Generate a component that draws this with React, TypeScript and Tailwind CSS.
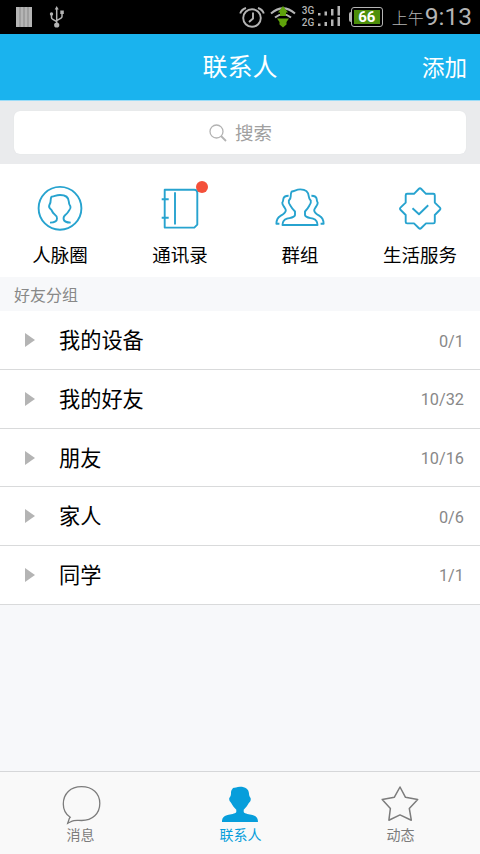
import { ReactElement } from "react";
import clsx from "clsx";

interface Shortcut {
  label: string;
  icon: ReactElement;
  hasBadge?: boolean;
}

interface FriendGroup {
  name: string;
  count: string;
}

interface Tab {
  label: string;
  icon: ReactElement;
  active?: boolean;
}

const shortcutIcon = {
  viewBox: "0 0 48 48",
  fill: "none",
  stroke: "#27a3cf",
  strokeWidth: 1.9,
  strokeLinejoin: "round" as const,
  className: "w-12 h-12 overflow-visible",
};

const shortcuts: Shortcut[] = [
  {
    label: "人脉圈",
    icon: (
      <svg {...shortcutIcon}>
        <circle cx="24" cy="24.3" r="21.4" />
        <path d="M14 38.600C18.500 38.600 21 37.500 21 34.500C21 32.500 19.800 31.200 18 29.800C16.300 28.500 16.200 26.800 15.200 25.700C13.500 24.400 12.500 23.200 13.300 21.200C14.400 19.200 14.800 17.500 14.700 16C14.700 14.500 15 13.500 15.600 12.600C18.500 12.800 19.500 11 24 11C29.500 11 32.600 13.500 32.800 17.500C32.800 19.500 33.400 21 34.400 22.300C35 23.800 34.400 25 33.200 26.300C32 28 31.600 29 29.800 30.500C28 31.800 27.300 33 27.600 35C28 37.800 31 38.600 34.700 38.600" />
      </svg>
    ),
  },
  {
    label: "通讯录",
    hasBadge: true,
    icon: (
      <svg {...shortcutIcon}>
        <path d="M8.700 5.800h29.600q3 0 3 3v31.800l-3 3H8.700zM19 8.300v32.200M5.700 15.300h7M5.700 33.700h7" />
      </svg>
    ),
  },
  {
    label: "群组",
    icon: (
      <svg {...shortcutIcon}>
        <path d="M15.700 7.500C18.500 7.500 20 5.400 24.300 5.400C29.300 5.400 32.500 8 32.800 12.500C32.900 14.300 33.700 15.300 34.800 16.700C35.300 18.700 34.500 20.200 33.300 21.700C32.200 23.700 31 25.500 29 27.500V31C29.400 33.600 33.500 33.700 37 34.700C40.300 35.800 41.500 37.600 41.500 41H6.500C6.500 37.600 7.700 35.800 11 34.700C14.500 33.700 18.600 33.600 19 31V27.500C17 25.500 15.400 23.700 14.400 21.700C13.200 20.200 12.300 18.700 12.800 16.700C14 15.300 14.800 14.300 14.700 12.500C14.600 10.500 14.800 9 15.700 7.500z" />
        <path d="M12.600 11.700C9.600 11.700 7.500 13 7.300 15.200C7.200 17 6.900 17.700 6.300 18.700C6.300 20.500 7.200 21.300 7.900 22.500C8.600 24 9.700 24.800 9.800 26.200C9.800 29 7 30.300 4.500 31.800C1.300 33.500.4 35.600.4 39.800H3.400M35.400 11.700C38.400 11.700 40.500 13 40.700 15.200C40.800 17 41.100 17.700 41.700 18.700C41.700 20.500 40.800 21.300 40.100 22.500C39.400 24 38.300 24.800 38.200 26.200C38.200 29 41 30.300 43.500 31.800C46.700 33.500 47.600 35.600 47.600 39.800H44.600" />
      </svg>
    ),
  },
  {
    label: "生活服务",
    icon: (
      <svg {...shortcutIcon}>
        <path d="M22.700 5q1.300-1.300 2.600 0L30 9.800h7.400q1.400 0 1.400 1.400v7.400l4.900 4.800q1.300 1.300 0 2.600L38.800 31v7q0 1.400-1.400 1.400H30L25.300 44q-1.300 1.300-2.600 0L18 39.400h-6.900q-1.400 0-1.400-1.400v-7l-5-5q-1.300-1.300 0-2.600l5-4.800v-7.400q0-1.400 1.400-1.400H18z" />
        <path d="M16.500 24.300l6.500 5.900 9.200-9" />
      </svg>
    ),
  },
];

const groups: FriendGroup[] = [
  { name: "我的设备", count: "0/1" },
  { name: "我的好友", count: "10/32" },
  { name: "朋友", count: "10/16" },
  { name: "家人", count: "0/6" },
  { name: "同学", count: "1/1" },
];

const tabs: Tab[] = [
  {
    label: "消息",
    icon: (
      <svg viewBox="0 0 40 40" className="w-10 h-10 overflow-visible" fill="none" stroke="#7c7c7c" strokeWidth="1.300">
        <path d="M10.200 32.200C5.500 29.200 3.300 24.500 3.300 19C3.300 8.500 10.500 1.700 21.500 1.700S39.800 8.500 39.800 18.500S32.500 35.500 21.500 35.500C18 35.500 16 35.300 14 35.600C11.500 36.100 10 37.300 7.700 38.300C8.300 36.500 8.700 35.600 8.900 34.600C9.200 33.700 9.400 33 10.200 32.200z" />
      </svg>
    ),
  },
  {
    label: "联系人",
    active: true,
    icon: (
      <svg viewBox="0 0 40 40" className="w-10 h-10" fill="#079edb">
        <path d="M12.300 3C15 3.200 16.500 1.700 20 1.700C25.500 1.700 28.700 4 29 8.500C29 10.500 29.600 11.500 30.600 13C31.200 15.500 30 16.800 28.800 18C27.500 20.500 26 22.500 23.700 24.800V27C24.700 29 29.500 29 32.500 30C36.500 31.200 38 33 38 37H2C2 33 3.500 31.200 7.500 30C10.500 29 15.300 29 16.300 27V24.800C14 22.500 12.500 20.500 11.200 18C10 16.800 8.800 15.500 9.300 13C10.400 11.500 11 10.500 11 8.500C10.900 6 11.600 4.300 13 3.800z" />
      </svg>
    ),
  },
  {
    label: "动态",
    icon: (
      <svg viewBox="0 0 40 40" className="w-10 h-10" fill="none" stroke="#7c7c7c" strokeWidth="1.500" strokeLinejoin="round">
        <path d="M20 2l5.500 10.300 12.200 2.100-8.400 9 2 11.800L20 29.900 8.900 35.200l1.500-11.800-8.200-9 12.200-2.200z" />
      </svg>
    ),
  },
];

function StatusBar(): ReactElement {
  return (
    <div className="flex h-[33.500px] shrink-0 items-center justify-between bg-black pl-4 pr-2 text-[#b4b4b4]">
      <div className="flex items-center gap-4">
        <svg viewBox="0 0 16 20" className="w-4 h-5" fill="#b5b5b5">
          <path d="M0 0h16v20H0z" />
          <path d="M4 0v20M8 0v20M12 0v20" stroke="#777" strokeWidth=".7" />
        </svg>
        <svg viewBox="0 0 16 22" className="ml-px w-4 h-[22px]" fill="none" stroke="#b4b4b4" strokeWidth="1.500">
          <path d="M7.700 3v15M2.500 8v3.500q0 1 1 1.700l4.200 2.500M13 6v4.500q0 1-1 1.600l-4.300 2.500" />
          <path d="M7.700 0l2 3.500h-4z" fill="#b4b4b4" stroke="none" />
          <circle cx="7.700" cy="19" r="2.600" fill="#b4b4b4" stroke="none" />
          <circle cx="2.500" cy="8" r="1.700" fill="#b4b4b4" stroke="none" />
          <path d="M11.300 4.500h3.500V8h-3.500z" fill="#b4b4b4" stroke="none" />
        </svg>
      </div>
      <div className="flex items-center">
        <svg viewBox="0 0 26 22" className="w-[26px] h-[22px]" fill="none" stroke="#b4b4b4" strokeWidth="1.900">
          <circle cx="13" cy="12" r="8.800" />
          <path d="M14 6.500v6l-4 3.500M1.200 7.500Q2.500 3.500 7 2M24.800 7.500Q23.500 3.500 19 2" />
        </svg>
        <svg viewBox="0 0 26 22" className="ml-[5px] w-[26px] h-[22px]" fill="none" stroke="#b4b4b4" strokeWidth="2">
          <path d="M1 7.500Q13-2.700 25 7.500M5 11.500Q13 5 21 11.500" />
          <path d="M13 0l5 6.500h-2V10h-6V6.500H8zM7 12.500h12L16.500 16v2.500L13 21.500l-3.500-3V16z" fill="#5fa30b" stroke="none" />
        </svg>
        <div className="ml-[6px] w-[13px] text-[10px] leading-[12px] font-medium">
          <div>3G</div>
          <div>2G</div>
        </div>
        <svg viewBox="0 0 24 22" className="ml-[2px] w-6 h-[22px]" fill="#b4b4b4">
          <path d="M1 7h2.500v2.500H1zM7.500 5.500H10v4H7.500zM14 3h2.500v6.500H14zM20.500 0H23v9.500h-2.500zM1 17.500h2.500V20H1zM7.500 16H10v4H7.500zM14 13.500h2.500V20H14zM20.500 11H23v9h-2.500z" />
        </svg>
        <div className="ml-[8px] flex items-center">
          <span className="h-2.5 w-[2px] rounded-l-sm bg-[#b4b4b4]" />
          <div className="flex h-5 w-8 rounded-[3px] border-[1.500px] border-[#b4b4b4] p-[2px]">
            <span className="flex flex-1 items-center justify-center bg-[#4d8f0b] pt-px text-[15px] font-bold leading-none text-white">
              66
            </span>
          </div>
        </div>
        <span className="ml-[9px] pt-1 text-[16px] font-light leading-5">上午</span>
        <span className="ml-[1px] text-[24.500px] leading-6">9:13</span>
      </div>
    </div>
  );
}

function Header(): ReactElement {
  return (
    <header className="grid h-[67px] shrink-0 grid-cols-3 items-center border-b border-[#9bdcf8] bg-[#1ab3ee] px-[13px] pt-0.5 text-white">
      <h1 className="col-start-2 pt-px text-center text-[25px] leading-8">联系人</h1>
      <button className="justify-self-end text-[22.500px] leading-8">添加</button>
    </header>
  );
}

function SearchBar(): ReactElement {
  return (
    <div className="h-[63.500px] shrink-0 bg-[#eaebed] px-3.5 pt-[10px]">
      <div className="flex h-[43px] items-center justify-center gap-2 rounded-md bg-white pt-[2px] pl-px shadow-[0_0_1px_#d8dade]">
        <svg viewBox="0 0 18 18" className="w-[18px] h-[18px]" fill="none" stroke="#b3b3b3" strokeWidth="1.300">
          <circle cx="7.500" cy="7.500" r="6.500" />
          <path d="M12 12l5 5" strokeWidth="1.800" />
        </svg>
        <span className="pt-px text-[18.500px] leading-6 text-[#a0a0a0]">搜索</span>
      </div>
    </div>
  );
}

function GroupRow({ name, count }: FriendGroup): ReactElement {
  return (
    <li className="flex h-[58.700px] items-center border-b border-[#d9dadb] bg-white pl-[25px] pr-4">
      <svg viewBox="0 0 10 14" className="w-2.5 h-3.5" fill="#b4b4b4">
        <path d="M0 0l10 7-10 7z" />
      </svg>
      <span className="ml-6 flex-1 pt-0.5 text-[21.200px] leading-7 text-black">{name}</span>
      <span className="pt-[3px] text-[16.300px] leading-6 text-[#888]">{count}</span>
    </li>
  );
}

export default function App(): ReactElement {
  return (
    <div className="flex h-[854px] w-[480px] flex-col overflow-hidden bg-[#f7f8fa] font-[Roboto,'Noto_Sans_CJK_SC',sans-serif]">
      <StatusBar />
      <Header />
      <SearchBar />

      {/* Shortcuts */}
      <nav className="grid h-[113px] shrink-0 grid-cols-4 bg-white pt-5">
        {shortcuts.map(({ label, icon, hasBadge }) => (
          <a key={label} className="flex flex-col items-center">
            <span className="relative">
              {icon}
              {hasBadge && (
                <span className="absolute -top-[3px] -right-[4px] h-3 w-3 rounded-full bg-[#f4503a]" />
              )}
            </span>
            <span className="mt-[10px] text-[18.500px] leading-7 text-black">{label}</span>
          </a>
        ))}
      </nav>

      {/* Friend groups */}
      <h2 className="flex h-[34.300px] shrink-0 items-center px-3.5 pt-1 text-[16px] text-[#888]">
        好友分组
      </h2>
      <ul className="flex-1">
        {groups.map((group) => (
          <GroupRow key={group.name} {...group} />
        ))}
      </ul>

      {/* Bottom tabs */}
      <footer className="grid h-[83px] shrink-0 grid-cols-3 border-t border-[#d6d7d9] bg-[#f9f9f9] pt-[13px]">
        {tabs.map(({ label, icon, active }) => (
          <button key={label} className="flex flex-col items-center">
            {icon}
            <span className={clsx("pl-px text-[14px] leading-5", active ? "text-[#079edb]" : "text-[#7c7c7c]")}>
              {label}
            </span>
          </button>
        ))}
      </footer>
    </div>
  );
}
